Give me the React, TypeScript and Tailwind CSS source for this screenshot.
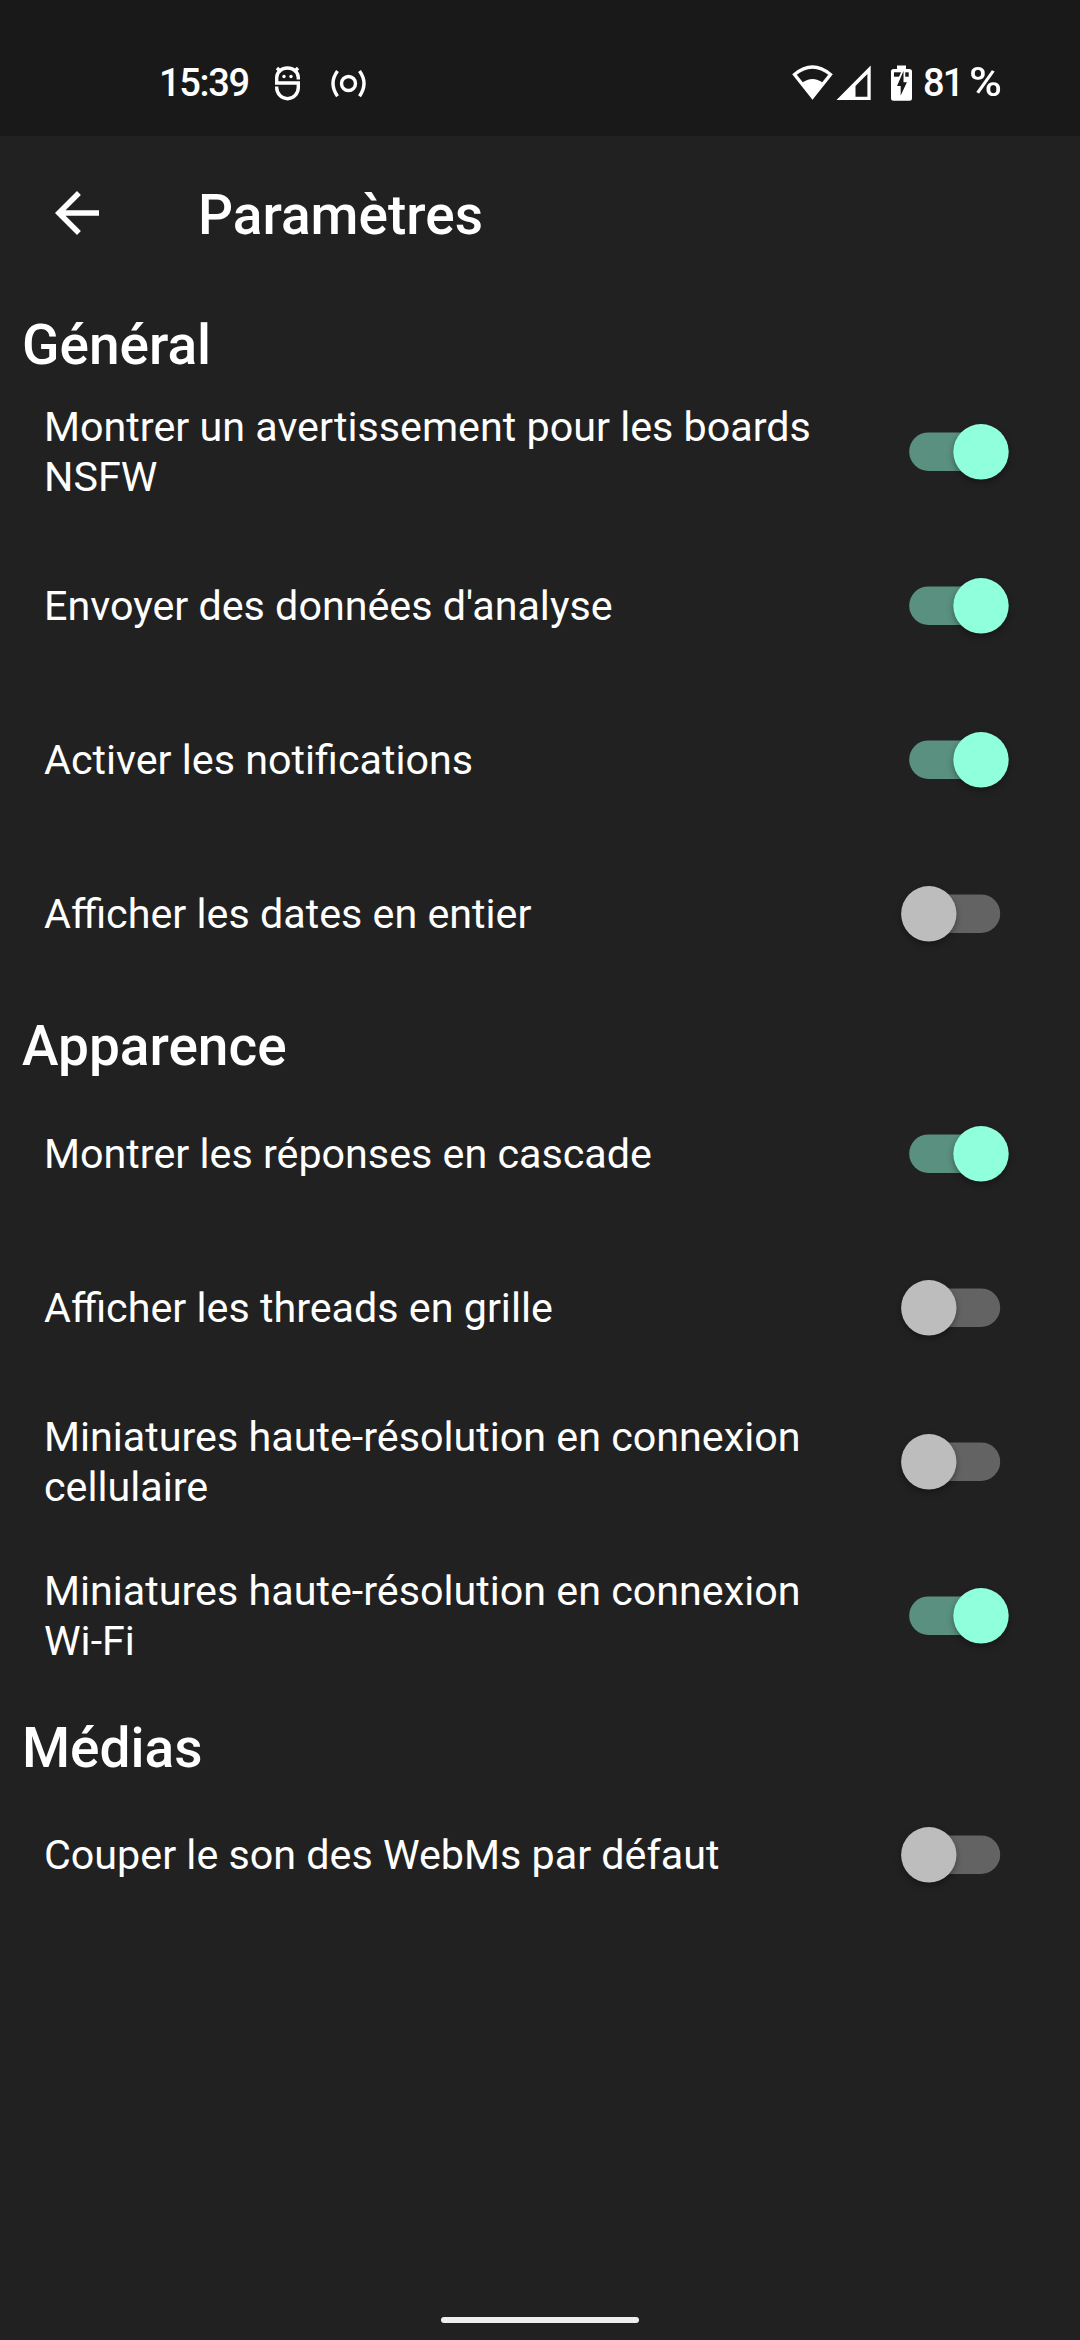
import React from 'react';

function Toggle({ on }: { on: boolean }) {
  return (
    <svg className="h-[80px] w-[120px] shrink-0 overflow-visible" viewBox="0 0 120 80">
      <rect x="14.2" y="20.4" width="91" height="38.6" rx="19.3" fill={on ? '#5a9080' : '#636363'} />
      <circle cx={on ? 86 : 33.8} cy="39.8" r="27.7" fill={on ? '#90ffdc' : '#bdbdbd'} className="drop-shadow-[0_3px_3px_rgba(0,0,0,0.35)]" />
    </svg>
  );
}

function Row({ label, on = false }: { label: React.ReactNode; on?: boolean }) {
  return (
    <div className="flex h-[154px] items-center justify-between pl-11 pr-[65px]">
      <span className="whitespace-nowrap text-[41.25px] leading-[50px]">{label}</span>
      <Toggle on={on} />
    </div>
  );
}

function Heading({ children }: { children: React.ReactNode }) {
  return <h2 className="h-[85.5px] pl-[22px] pt-[22px] text-[55px] font-medium leading-[66px]">{children}</h2>;
}

function StatusBar() {
  return (
    <div className="flex h-[136px] items-start bg-[#191919] pl-[159px] pt-[60px] text-[38px] font-medium leading-[46px]">
      <span className="w-[115px] tracking-[-1.3px]">15:39</span>
      <svg className="h-[46px] w-[28px]" viewBox="274 60 28 46" fill="none" stroke="#fff" strokeWidth="3.4">
        <path d="M298.300 79.500V77.500a10.800 9.500 0 0 0-21.600 0V83H298.300V87.500a10.800 11.200 0 0 1-21.600 0V86.500" />
        <path d="M277 68l4 4M298 68l-4 4" />
        <circle cx="284" cy="76.500" r="1.700" fill="#fff" stroke="none" />
        <circle cx="291" cy="76.500" r="1.700" fill="#fff" stroke="none" />
      </svg>
      <svg className="ml-[28px] h-[46px] w-[38px]" viewBox="330 60 38 46" fill="none" stroke="#fff" strokeWidth="3.4">
        <circle cx="348.500" cy="83.500" r="7" />
        <path d="M337.500 71q-9 12.300 0 25.200M359.500 71q9 12.300 0 25.200" />
      </svg>
      <svg className="ml-[424px] h-[46px] w-[80px]" viewBox="792 60 80 46">
        <path d="M794.500 74.500Q812.500 59.500 830.500 74.500L812.500 97Z" fill="none" stroke="#fff" strokeWidth="3.300" />
        <path d="M802 83q10.500-8 21 0L812.500 99.500Z" fill="#fff" />
        <path fillRule="evenodd" d="M870.700 65.500V100H836.500ZM867.400 74L855.500 86V96.700H867.400Z" fill="#fff" />
      </svg>
      <svg className="ml-[18px] h-[46px] w-[24px]" viewBox="890 60 24 46">
        <path d="M897 65.500h9v3.500h3.500q2.500 0 2.500 2.500v26.700q0 2.500-2.500 2.500h-16q-2.500 0-2.500-2.500V71.500q0-2.500 2.500-2.500h3.500z" fill="#fff" />
        <path d="M894 72.300h14.700v4.400H894z" fill="#191919" />
        <path d="M903.500 71L897 86h3.700v9.500L906.900 82.300H903.500z" fill="#191919" stroke="#fff" strokeWidth="3.500" paintOrder="stroke" />
      </svg>
      <span className="ml-[9px] flex whitespace-nowrap">
        <span className="w-[46px] tracking-[-1.800px]">81</span>
        <span className="origin-left scale-x-[1.12] text-[40px]">%</span>
      </span>
    </div>
  );
}

export default function App() {
  return (
    <div className="flex h-[2340px] w-[1080px] flex-col overflow-hidden bg-[#212121] font-[Roboto,sans-serif] text-white">
      <StatusBar />
      <header className="flex h-[153.5px] items-center pl-11 text-[55px] font-medium">
        <svg className="h-[66px] w-[66px]" viewBox="0 0 24 24" fill="#fff">
          <path d="M20 11H7.830l5.590-5.590L12 4l-8 8 8 8 1.410-1.410L7.830 13H20v-2z" />
        </svg>
        <h1 className="ml-[88px] pt-[5px]">Paramètres</h1>
      </header>
      <main className="flex-1">
        <Heading>Général</Heading>
        <Row on label={<>Montrer un avertissement pour les boards<br />NSFW</>} />
        <Row on label="Envoyer des données d'analyse" />
        <Row on label="Activer les notifications" />
        <Row label="Afficher les dates en entier" />
        <Heading>Apparence</Heading>
        <Row on label="Montrer les réponses en cascade" />
        <Row label="Afficher les threads en grille" />
        <Row label={<>Miniatures haute-résolution en connexion<br />cellulaire</>} />
        <Row on label={<>Miniatures haute-résolution en connexion<br />Wi-Fi</>} />
        <Heading>Médias</Heading>
        <Row label="Couper le son des WebMs par défaut" />
      </main>
      <div className="mx-auto mb-[17px] h-[6px] w-[198px] rounded-full bg-[#eeeeee]" />
    </div>
  );
}
